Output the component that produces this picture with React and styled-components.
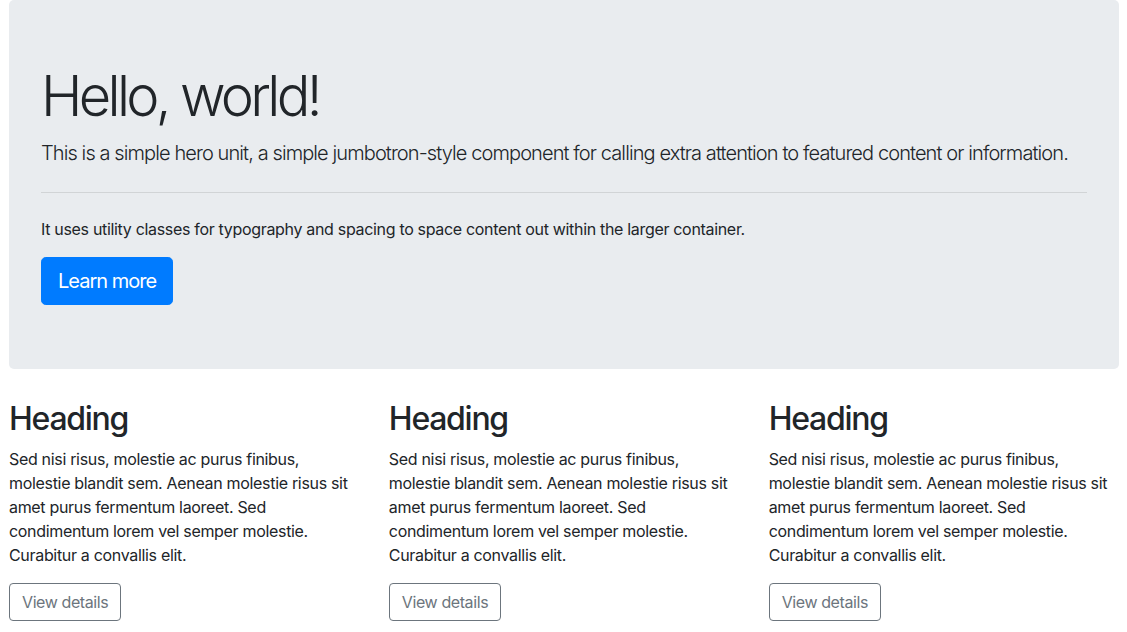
import React from 'react';
import styled, { createGlobalStyle } from 'styled-components';

const GlobalStyle = createGlobalStyle`
  html, body {
    margin: 0;
    padding: 0;
    background: #fff;
  }
  body {
    font-family: Inter, "Noto Sans", "Liberation Sans", sans-serif;
    font-size: 16px;
    line-height: 1.5;
    letter-spacing: -0.02em;
    color: #212529;
  }
  *, *::before, *::after { box-sizing: border-box; }
`;

const Container = styled.main`
  width: 1110px;
  margin: 0 auto;
  padding-left: 0.5px;
`;

const Jumbotron = styled.section`
  background-color: #e9ecef;
  border-radius: 5px;
  padding: 63px 32px 64px;
  margin-bottom: 32px;
`;

const Display = styled.h1`
  margin: 0 0 8px;
  font-size: 56px;
  font-weight: 300;
  line-height: 1.2;
  letter-spacing: -3.7px;
`;

const Lead = styled.p`
  margin: 0;
  font-size: 20px;
  font-weight: 300;
  line-height: 1.5;
  letter-spacing: -0.045em;
`;

const Divider = styled.hr`
  margin: 24px 0;
  border: 0;
  border-top: 1px solid rgba(0, 0, 0, 0.1);
`;

const Text = styled.p`
  margin: 0 0 16px;
  font-size: 16px;
  line-height: 1.5;
`;

const Button = styled.a`
  display: inline-block;
  text-decoration: none;
  font-weight: 400;
  border: 1px solid ${p => (p.$primary ? '#007bff' : '#6c757d')};
  background: ${p => (p.$primary ? '#007bff' : 'transparent')};
  color: ${p => (p.$primary ? '#fff' : '#6c757d')};
  padding: ${p => (p.$large ? '8px 16px' : '6px 12px')};
  font-size: ${p => (p.$large ? '20px' : '16px')};
  letter-spacing: ${p => (p.$large ? '-0.05em' : '-0.025em')};
  line-height: 1.5;
  border-radius: ${p => (p.$large ? '4.8px' : '4px')};
`;

const Row = styled.div`
  display: grid;
  grid-template-columns: repeat(3, 1fr);
  column-gap: 30px;
  margin-top: -1px;
`;

const Column = styled.div``;

const Heading = styled.h2`
  margin: 0 0 8px;
  font-size: 32px;
  font-weight: 500;
  line-height: 1.2;
  letter-spacing: -0.04em;
`;

const body =
  'Sed nisi risus, molestie ac purus finibus, molestie blandit sem. Aenean molestie risus sit amet purus fermentum laoreet. Sed condimentum lorem vel semper molestie. Curabitur a convallis elit.';

export default function App() {
  return (
    <>
      <GlobalStyle />
      <Container>
        <Jumbotron>
          <Display>Hello, world!</Display>
          <Lead>
            This is a simple hero unit, a simple jumbotron-style component for calling extra attention to featured content or information.
          </Lead>
          <Divider />
          <Text>It uses utility classes for typography and spacing to space content out within the larger container.</Text>
          <Button $primary $large href="#">Learn more</Button>
        </Jumbotron>
        <Row>
          {[0, 1, 2].map(i => (
            <Column key={i}>
              <Heading>Heading</Heading>
              <Text>{body}</Text>
              <Button href="#">View details</Button>
            </Column>
          ))}
        </Row>
      </Container>
    </>
  );
}
